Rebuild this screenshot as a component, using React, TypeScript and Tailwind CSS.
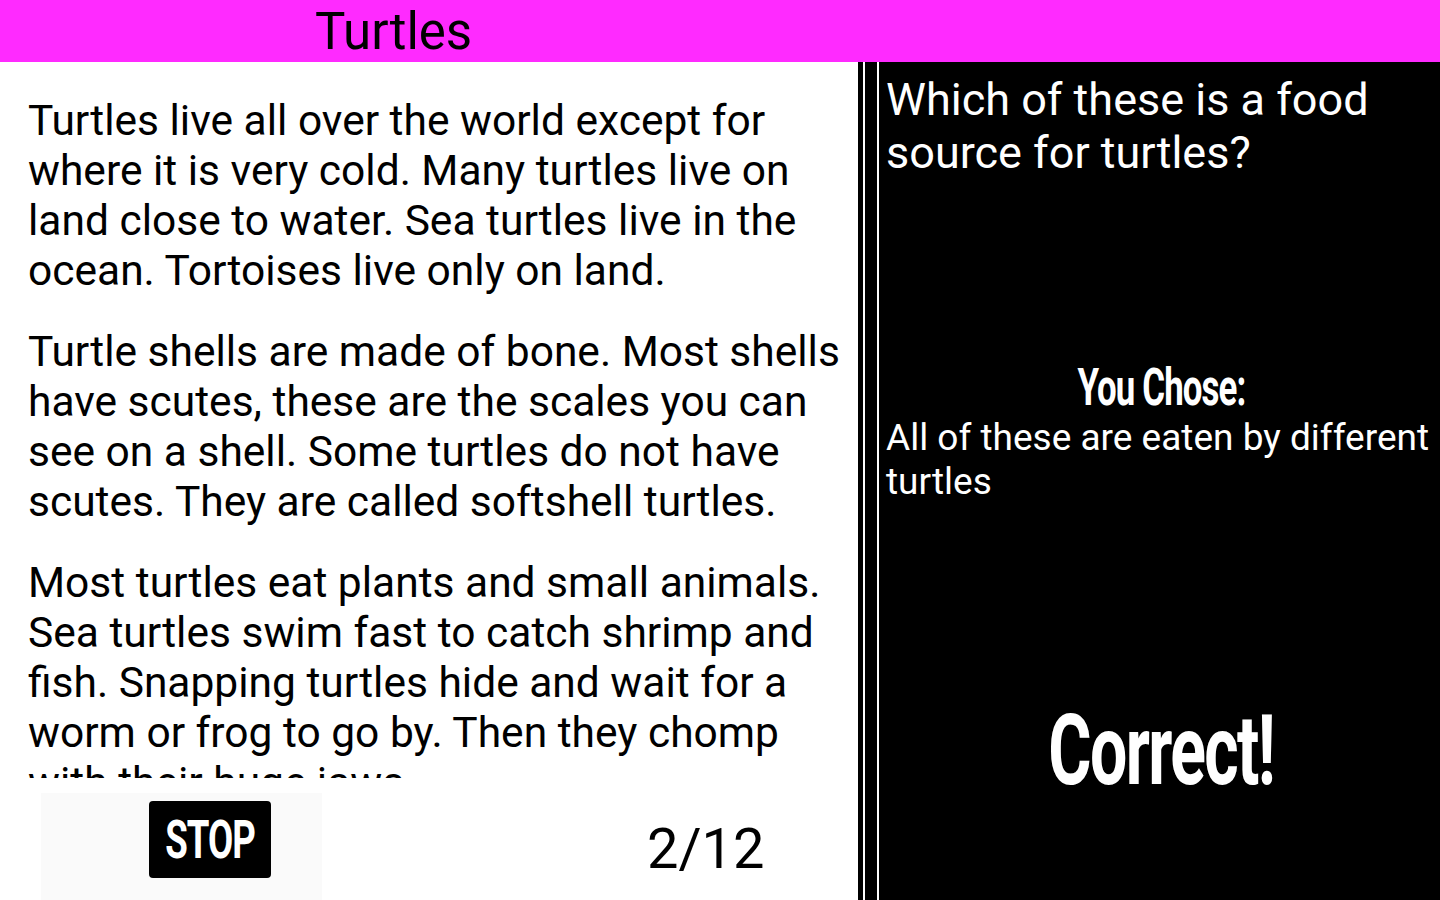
import React from "react";

const roboto = { fontFamily: "Roboto, 'Noto Sans', sans-serif" } as React.CSSProperties;

export default function App() {
  return (
    <div
      className="w-[1440px] h-[900px] overflow-hidden flex flex-col bg-white"
      style={roboto}
    >
      {/* Header */}
      <div className="h-[62px] shrink-0 overflow-hidden bg-[#ff2aff] pl-[315px]">
        <span className="text-[51px] leading-[63px] text-black">Turtles</span>
      </div>

      <div className="flex flex-1 min-h-0">
        {/* Left reading pane */}
        <div className="w-[858px] shrink-0 flex flex-col bg-white">
          <div className="h-[716px] overflow-hidden pl-[28px] pr-[2px] pt-[34px] text-black text-[42.5px] leading-[50px]">
            <p>
              Turtles live all over the world except for where it is very cold. Many turtles live on land close to water. Sea turtles live in the ocean. Tortoises live only on land.
            </p>
            <p className="mt-[31px]">
              Turtle shells are made of bone. Most shells have scutes, these are the scales you can see on a shell. Some turtles do not have scutes. They are called softshell turtles.
            </p>
            <p className="mt-[31px]">
              Most turtles eat plants and small animals. Sea turtles swim fast to catch shrimp and fish. Snapping turtles hide and wait for a worm or frog to go by. Then they chomp with their huge jaws.
            </p>
          </div>
          <div className="flex-1 flex items-start pl-[41px] pt-[15px]">
            <div className="w-[281px] h-[107px] bg-[#fafafa] pl-[108px] pt-[8px]">
              <div className="w-[122px] h-[77px] bg-black rounded-[4px] flex items-center justify-center overflow-hidden">
                <span className="inline-block text-white font-bold text-[53px] leading-[60px] scale-x-[0.69] tracking-tight">
                  STOP
                </span>
              </div>
            </div>
            <div className="ml-[325px] mt-[26px] text-[56px] leading-[60px] text-black">2/12</div>
          </div>
        </div>

        {/* Divider */}
        <div className="w-[5px] shrink-0 bg-black" />
        <div className="w-[2px] shrink-0 bg-white" />
        <div className="w-[12px] shrink-0 bg-black" />
        <div className="w-[2px] shrink-0 bg-white" />

        {/* Right quiz pane */}
        <div className="flex-1 bg-black text-white pl-[7px] pr-[4px] pt-[11px] flex flex-col">
          <div className="text-[45px] leading-[53px]">
            Which of these is a food source for turtles?
          </div>
          <div className="mt-[179px] text-center">
            <span className="inline-block font-bold text-[52px] leading-[60px] scale-x-[0.67] tracking-tight">
              You Chose:
            </span>
          </div>
          <div className="-mt-[2px] text-[37px] leading-[44px]">
            All of these are eaten by different turtles
          </div>
          <div className="mt-[192px] text-center">
            <span className="inline-block font-bold text-[98px] leading-[110px] scale-x-[0.675] tracking-tight">
              Correct!
            </span>
          </div>
        </div>
      </div>
    </div>
  );
}
